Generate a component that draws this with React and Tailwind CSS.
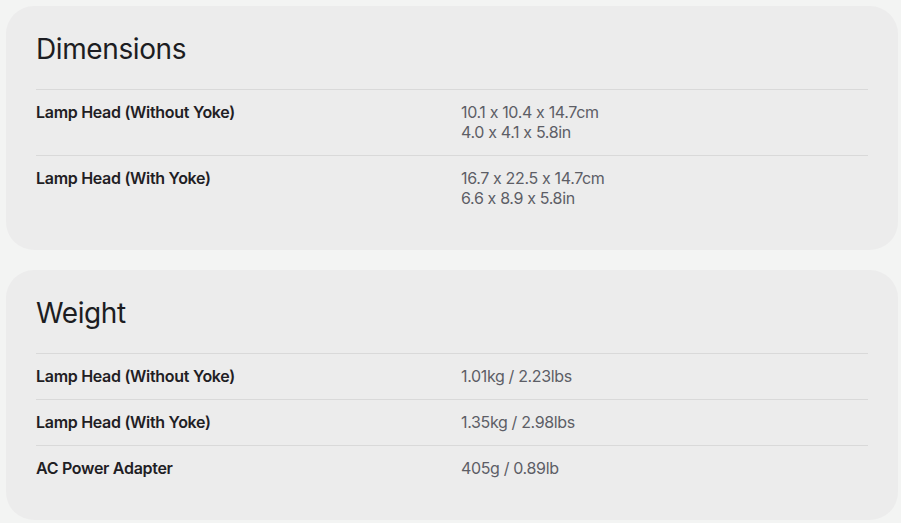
import React from 'react';

const sections = [
  {
    title: 'Dimensions',
    rows: [
      { label: 'Lamp Head (Without Yoke)', values: ['10.1 x 10.4 x 14.7cm', '4.0 x 4.1 x 5.8in'] },
      { label: 'Lamp Head (With Yoke)', values: ['16.7 x 22.5 x 14.7cm', '6.6 x 8.9 x 5.8in'] },
    ],
  },
  {
    title: 'Weight',
    rows: [
      { label: 'Lamp Head (Without Yoke)', values: ['1.01kg / 2.23lbs'] },
      { label: 'Lamp Head (With Yoke)', values: ['1.35kg / 2.98lbs'] },
      { label: 'AC Power Adapter', values: ['405g / 0.89lb'] },
    ],
  },
];

function SpecCard({ title, rows }) {
  return (
    <div className="bg-[#ececec] rounded-[28px] px-[30px] pt-[25px] pb-[29px]">
      <h2 className="text-[28px] leading-[36px] tracking-[-0.4px] text-[#1c1d22] mb-[22px]">{title}</h2>
      {rows.map((r, idx) => (
        <div key={idx} className="grid grid-cols-[425px_1fr] border-t border-[#d9d9d9] pt-3 pb-[13px]">
          <div className="text-[16px] leading-5 font-semibold text-[#1f2024] tracking-[-0.3px]">{r.label}</div>
          <div className="text-[16px] leading-5 text-[#5d5e66] tracking-[-0.35px]">
            {r.values.map((v, i) => (
              <div key={i}>{v}</div>
            ))}
          </div>
        </div>
      ))}
    </div>
  );
}

export default function App() {
  return (
    <div className="min-h-screen bg-[#f3f4f3] p-[6px] pr-[3px] flex flex-col gap-5" style={{ fontFamily: 'Inter, "Noto Sans", sans-serif' }}>
      {sections.map((s) => (
        <SpecCard key={s.title} title={s.title} rows={s.rows} />
      ))}
    </div>
  );
}
